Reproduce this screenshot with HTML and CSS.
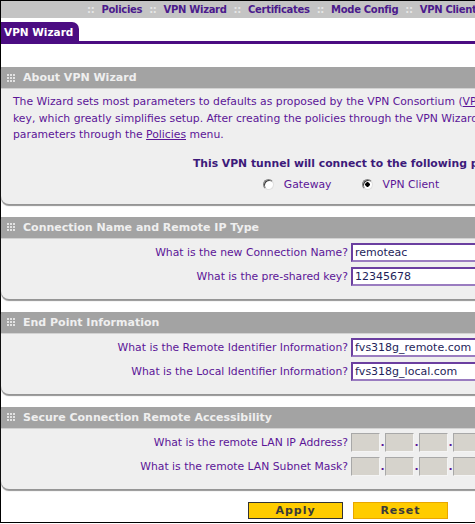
FILE: index.html
```html
<!DOCTYPE html>
<html lang="en">

<head>
    <meta charset="UTF-8">
    <title>VPN Wizard</title>
    <link rel="stylesheet" href="styles.css">
</head>

<body>
    <div class="frame">
        <div class="topnav">
            <span class="sep">::</span><a href="#">Policies</a>
            <span class="sep">::</span><a href="#">VPN Wizard</a>
            <span class="sep">::</span><a href="#">Certificates</a>
            <span class="sep">::</span><a href="#">Mode Config</a>
            <span class="sep">::</span><a href="#">VPN Client</a>
        </div>

        <div class="tabbar">
            <span class="tab">VPN Wizard</span>
        </div>

        <form class="content">
            <div class="section">
                <div class="section-head">
                    <svg class="grip" width="8" height="8" viewBox="0 0 8 8">
                        <rect x="0" y="0" width="2" height="2"/><rect x="3" y="0" width="2" height="2"/><rect x="6" y="0" width="2" height="2"/>
                        <rect x="0" y="3" width="2" height="2"/><rect x="3" y="3" width="2" height="2"/><rect x="6" y="3" width="2" height="2"/>
                        <rect x="0" y="6" width="2" height="2"/><rect x="3" y="6" width="2" height="2"/><rect x="6" y="6" width="2" height="2"/>
                    </svg>
                    About VPN Wizard
                </div>
                <div class="section-body about">
                    <p class="intro">
                        The Wizard sets most parameters to defaults as proposed by the VPN Consortium (<a href="#">VPNC</a>), and assumes a pre-shared<br>
                        key, which greatly simplifies setup. After creating the policies through the VPN Wizard, you can always update the<br>
                        parameters through the <a href="#">Policies</a> menu.
                    </p>
                    <p class="peer-title">This VPN tunnel will connect to the following peers:</p>
                    <div class="peer-choice">
                        <label><input type="radio" name="peer" value="gateway"> Gateway</label>
                        <label><input type="radio" name="peer" value="client" checked> VPN Client</label>
                    </div>
                </div>
            </div>

            <div class="section">
                <div class="section-head">
                    <svg class="grip" width="8" height="8" viewBox="0 0 8 8">
                        <rect x="0" y="0" width="2" height="2"/><rect x="3" y="0" width="2" height="2"/><rect x="6" y="0" width="2" height="2"/>
                        <rect x="0" y="3" width="2" height="2"/><rect x="3" y="3" width="2" height="2"/><rect x="6" y="3" width="2" height="2"/>
                        <rect x="0" y="6" width="2" height="2"/><rect x="3" y="6" width="2" height="2"/><rect x="6" y="6" width="2" height="2"/>
                    </svg>
                    Connection Name and Remote IP Type
                </div>
                <div class="section-body rows">
                    <label class="row-label">What is the new Connection Name?</label>
                    <input type="text" class="field" value="remoteac">
                    <label class="row-label">What is the pre-shared key?</label>
                    <input type="text" class="field" value="12345678">
                </div>
            </div>

            <div class="section">
                <div class="section-head">
                    <svg class="grip" width="8" height="8" viewBox="0 0 8 8">
                        <rect x="0" y="0" width="2" height="2"/><rect x="3" y="0" width="2" height="2"/><rect x="6" y="0" width="2" height="2"/>
                        <rect x="0" y="3" width="2" height="2"/><rect x="3" y="3" width="2" height="2"/><rect x="6" y="3" width="2" height="2"/>
                        <rect x="0" y="6" width="2" height="2"/><rect x="3" y="6" width="2" height="2"/><rect x="6" y="6" width="2" height="2"/>
                    </svg>
                    End Point Information
                </div>
                <div class="section-body rows">
                    <label class="row-label">What is the Remote Identifier Information?</label>
                    <input type="text" class="field" value="fvs318g_remote.com">
                    <label class="row-label">What is the Local Identifier Information?</label>
                    <input type="text" class="field" value="fvs318g_local.com">
                </div>
            </div>

            <div class="section">
                <div class="section-head">
                    <svg class="grip" width="8" height="8" viewBox="0 0 8 8">
                        <rect x="0" y="0" width="2" height="2"/><rect x="3" y="0" width="2" height="2"/><rect x="6" y="0" width="2" height="2"/>
                        <rect x="0" y="3" width="2" height="2"/><rect x="3" y="3" width="2" height="2"/><rect x="6" y="3" width="2" height="2"/>
                        <rect x="0" y="6" width="2" height="2"/><rect x="3" y="6" width="2" height="2"/><rect x="6" y="6" width="2" height="2"/>
                    </svg>
                    Secure Connection Remote Accessibility
                </div>
                <div class="section-body rows">
                    <label class="row-label">What is the remote LAN IP Address?</label>
                    <div class="ip">
                        <input type="text" disabled><span>.</span><input type="text" disabled><span>.</span><input type="text" disabled><span>.</span><input type="text" disabled>
                    </div>
                    <label class="row-label">What is the remote LAN Subnet Mask?</label>
                    <div class="ip">
                        <input type="text" disabled><span>.</span><input type="text" disabled><span>.</span><input type="text" disabled><span>.</span><input type="text" disabled>
                    </div>
                </div>
            </div>

            <div class="buttons">
                <button type="submit" class="btn btn-apply">Apply</button>
                <button type="reset" class="btn">Reset</button>
            </div>
        </form>
    </div>
</body>

</html>
```

FILE: styles.css
```css
body {
    margin: 0;
    overflow: hidden;
    background-color: #fff;
    font-family: "DejaVu Sans", Verdana, sans-serif;
    font-size: 10.8px;
    color: #5b1597;
}

a {
    color: #5b1597;
}

.frame {
    width: 700px;
    height: 521px;
    border: 1px solid #000;
    border-right: none;
}

.topnav {
    height: 17px;
    padding-left: 79px;
    display: flex;
    align-items: center;
    background-color: #c4c4c4;
    white-space: nowrap;
    font-size: 10px;
    letter-spacing: -0.3px;
}

.topnav a {
    color: #4b1a8c;
    font-weight: bold;
    text-decoration: none;
}

.topnav .sep {
    color: #e6e6e6;
    font-weight: bold;
    padding: 0 7px;
}

.tabbar {
    padding-top: 4px;
    border-bottom: 3px solid #4b0c82;
    line-height: 0;
}

.tab {
    display: inline-block;
    height: 19px;
    line-height: 20px;
    padding: 0 6px 0 3px;
    background-color: #4b0c82;
    border-radius: 0 7px 0 0;
    color: #fff;
    font-size: 10.5px;
    font-weight: bold;
}

.content {
    margin: 23px 0 0;
}

.section {
    margin-bottom: 13px;
    background-color: #efefef;
    border-radius: 0 0 8px 8px;
    box-shadow: 0 2px 1px #959595;
}

.section-head {
    height: 21px;
    line-height: 21px;
    padding-left: 6px;
    display: flex;
    align-items: center;
    gap: 8px;
    background-color: #a3a3a3;
    border-bottom: 1px solid #d2d2d2;
    color: #efefef;
    font-size: 11px;
    font-weight: bold;
}

.grip {
    fill: #e2e2e2;
}

.section-body {
    padding: 4px 0 13px;
}

.about {
    padding: 5px 0 13px 12px;
}

.intro {
    margin: 0;
    line-height: 16.5px;
    white-space: nowrap;
}

.peer-title {
    margin: 13px 0 0;
    padding-right: 12px;
    text-align: center;
    font-weight: bold;
    color: #3d1a7a;
}

.peer-choice {
    margin-top: 8px;
    padding-right: 12px;
    display: flex;
    justify-content: center;
    gap: 30px;
}

.peer-choice label {
    display: flex;
    align-items: center;
    gap: 10px;
}

.peer-choice input {
    appearance: none;
    width: 11px;
    height: 11px;
    margin: 0;
    border-radius: 50%;
    background-color: #fff;
    border: 1px solid;
    border-color: #808080 #e0e0e0 #e0e0e0 #808080;
    box-shadow: inset 1px 1px 0 #404040;
}

.peer-choice input:checked {
    background: radial-gradient(circle, #000 0 2px, #fff 2.5px);
}

.rows {
    display: grid;
    grid-template-columns: 350px 1fr;
    row-gap: 5px;
    column-gap: 0;
    align-items: center;
}

.row-label {
    padding-right: 3px;
    text-align: right;
}

.field {
    width: 160px;
    height: 19px;
    box-sizing: border-box;
    margin: 0;
    padding: 0 2px;
    border: 2px solid #6b3fa0;
    border-right-color: #9a7cc0;
    border-bottom-color: #9a7cc0;
    font-family: "DejaVu Sans", Verdana, sans-serif;
    font-size: 11px;
    color: #1e1e5a;
}

.ip {
    display: flex;
    align-items: center;
}

.ip input {
    width: 29px;
    height: 19px;
    box-sizing: border-box;
    margin: 0;
    border: 1px solid;
    border-color: #a8a8a8 #f4f4f4 #f4f4f4 #a8a8a8;
    background-color: #d6d3cc;
}

.ip span {
    width: 5px;
    text-align: center;
    font-weight: bold;
}

.buttons {
    margin-top: 12px;
    padding-right: 6px;
    display: flex;
    justify-content: center;
    gap: 10px;
}

.btn {
    width: 95px;
    height: 17px;
    padding: 0;
    background-color: #ffcc00;
    border: 1px solid #e8a600;
    font-family: "DejaVu Sans", Verdana, sans-serif;
    font-size: 11px;
    font-weight: bold;
    letter-spacing: 1px;
    color: #3a3a3a;
}

.btn-apply {
    border-color: #333;
}
```
